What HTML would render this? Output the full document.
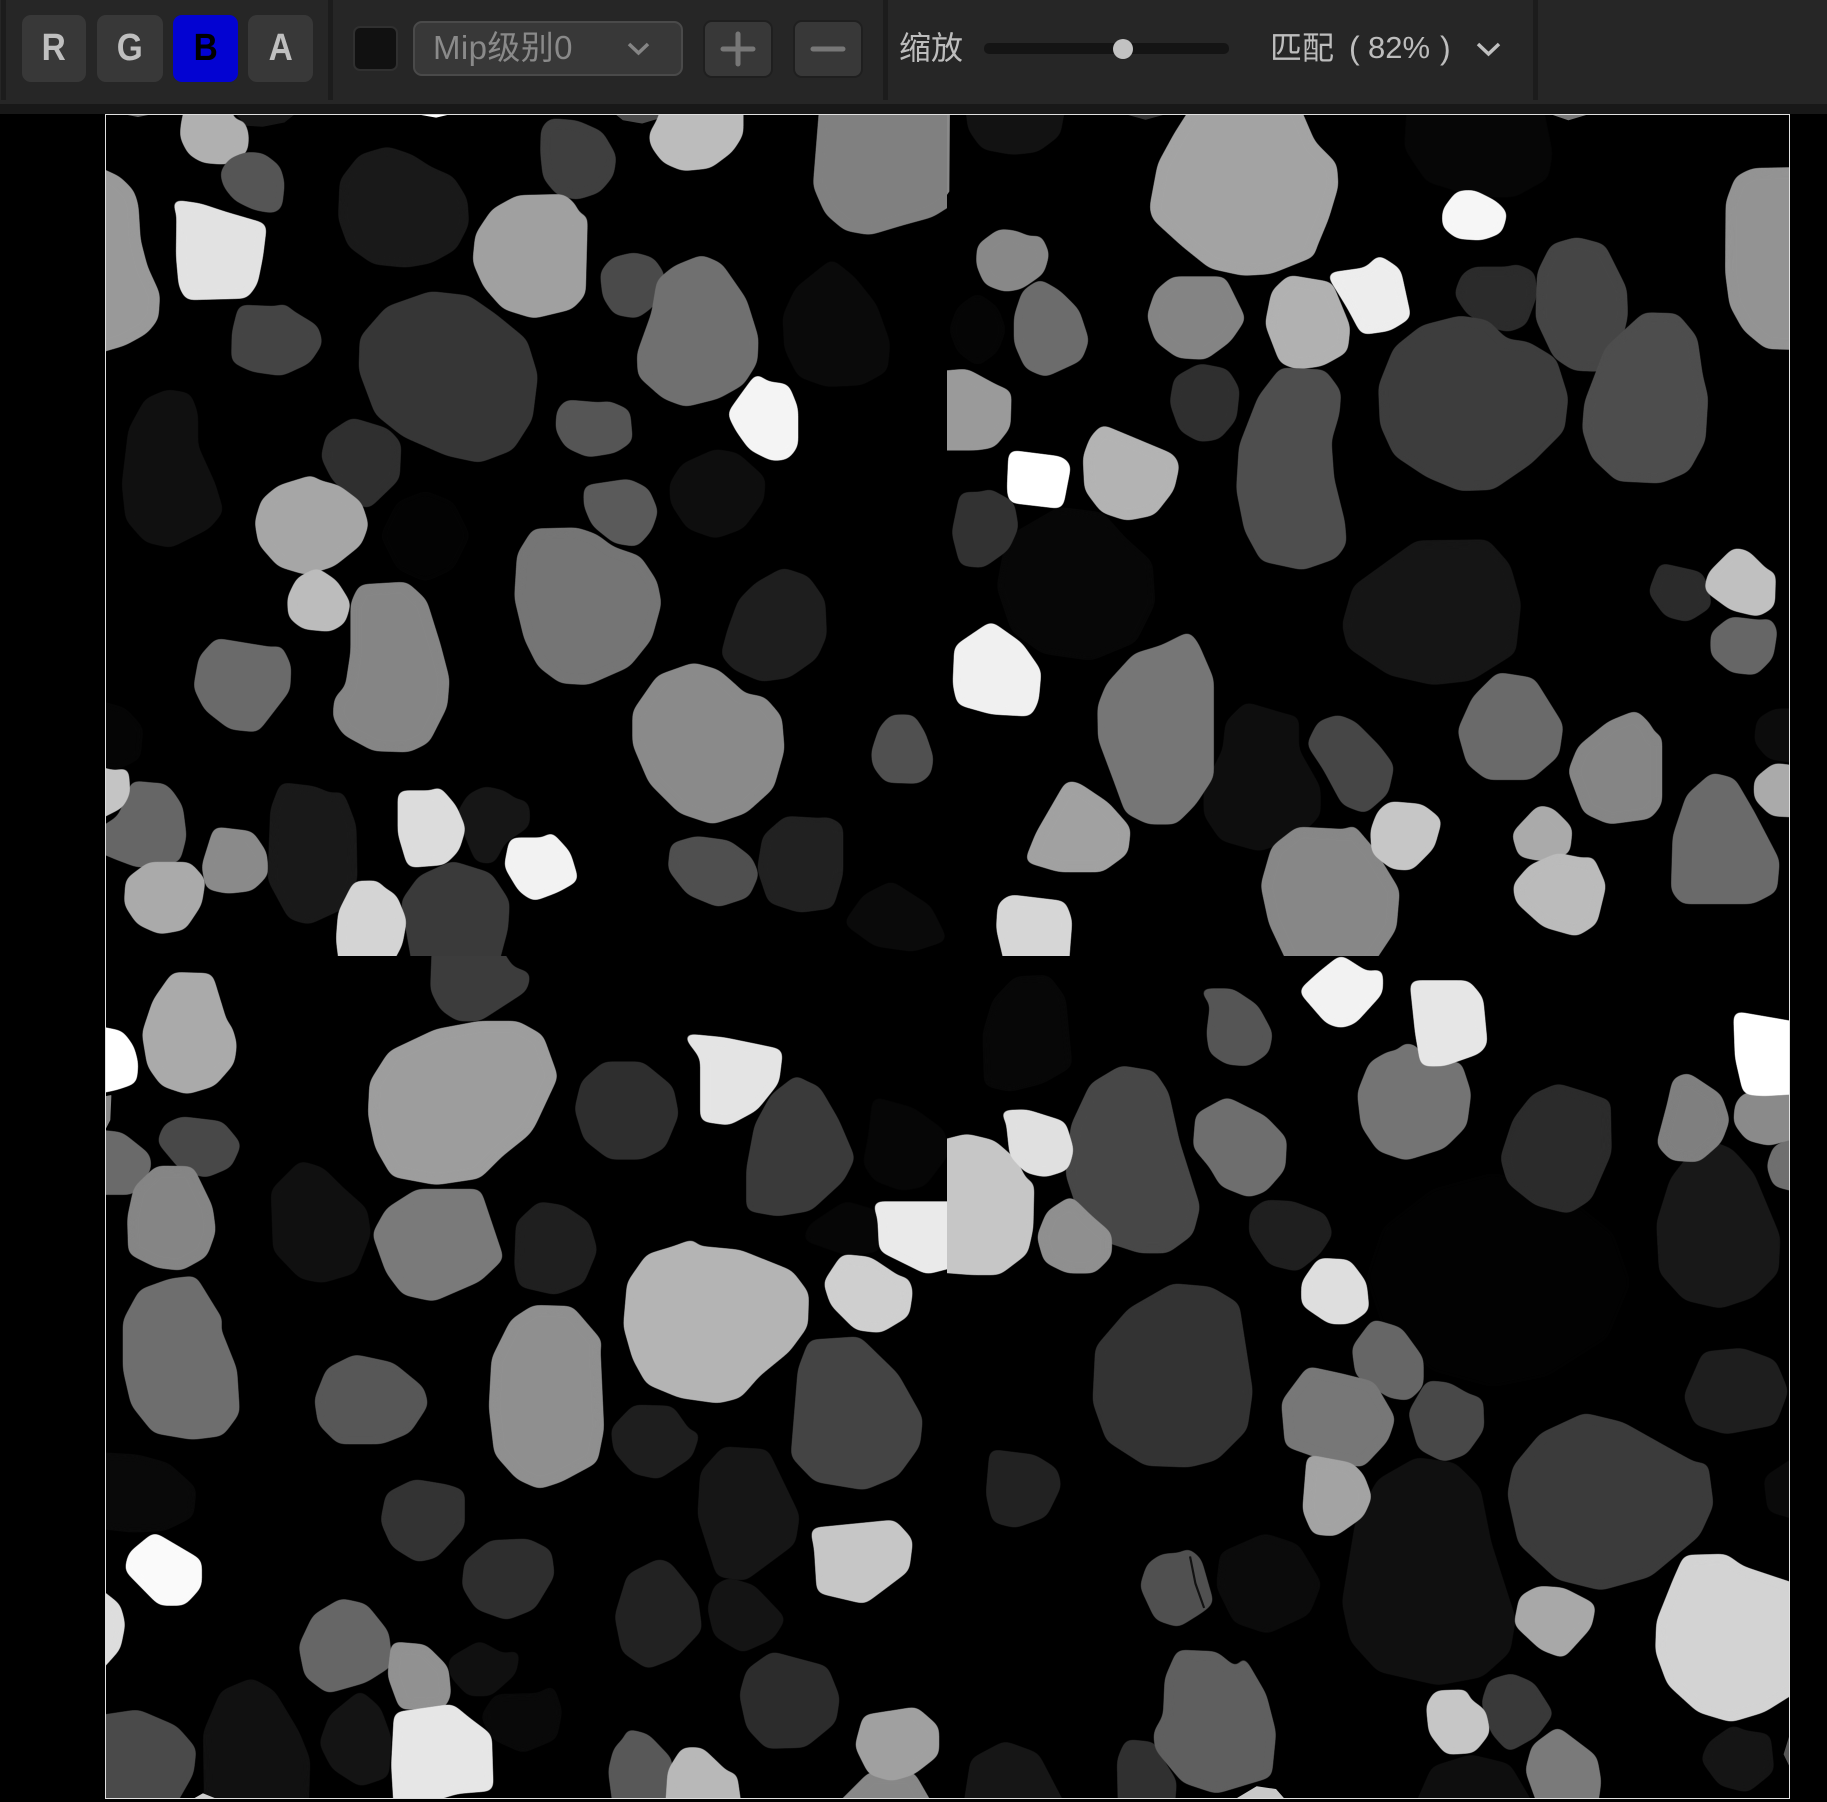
<!DOCTYPE html>
<html lang="zh"><head><meta charset="utf-8"><title>Mip</title>
<style>
html,body{margin:0;padding:0;background:#000;width:1827px;height:1802px;overflow:hidden}
body{position:relative;font-family:"Liberation Sans","Noto Sans CJK SC",sans-serif}
.a{position:absolute;box-sizing:border-box}
.btn{top:15px;height:67px;border-radius:9px;background:#383838;color:#bfbfbf;font-weight:700;font-size:38px;line-height:67px;text-align:center}
.btn span{display:inline-block;transform:scaleX(.88)}
.sep{top:0;width:5px;height:100px;background:#1c1c1c}
.sq{top:20px;height:58px;width:70px;border-radius:9px;background:#383838;border:2px solid #1f1f1f}
.t{white-space:nowrap;font-size:32px;line-height:40px}
svg polygon{fill:currentColor;stroke:currentColor;stroke-width:6;stroke-linejoin:round;filter:url(#r)}
svg polygon.n{filter:none;stroke-width:2}
</style></head><body>
<div class="a" style="left:0;top:0;width:1827px;height:104px;background:#262626"></div>
<div class="a" style="left:0;top:104px;width:1827px;height:10px;background:#181818"></div>
<div class="a sep" style="left:1px"></div><div class="a sep" style="left:328px"></div><div class="a sep" style="left:883px"></div><div class="a sep" style="left:1533px"></div>
<div class="a btn" style="left:22px;width:64px"><span>R</span></div>
<div class="a btn" style="left:97px;width:66px"><span>G</span></div>
<div class="a btn" style="left:173px;width:65px;background:#0303d2;color:#000"><span>B</span></div>
<div class="a btn" style="left:248px;width:65px"><span>A</span></div>
<div class="a" style="left:353px;top:26px;width:45px;height:45px;border-radius:7px;background:#111;border:2px solid #303030"></div>
<div class="a" style="left:413px;top:21px;width:270px;height:55px;border-radius:9px;background:#383838;border:2px solid #4a4a4a"></div>
<div class="a t" style="left:433px;top:28px;color:#8a8a8a;font-size:33px;letter-spacing:.4px">Mip级别0</div>
<div class="a sq" style="left:703px"></div><div class="a sq" style="left:793px"></div>
<div class="a t" style="left:899px;top:28px;color:#bdbdbd">缩放</div>
<div class="a" style="left:984px;top:43px;width:245px;height:11px;border-radius:5px;background:#141414"></div>
<div class="a" style="left:1113px;top:39px;width:20px;height:20px;border-radius:50%;background:#c2c2c2"></div>
<div class="a t" style="left:1270px;top:28px;color:#bdbdbd">匹配</div>
<div class="a t" style="left:1349px;top:28px;color:#bdbdbd">(</div>
<div class="a t" style="left:1368px;top:28px;color:#bdbdbd;font-size:31px">82%</div>
<div class="a t" style="left:1440px;top:28px;color:#bdbdbd">)</div>
<svg class="a" style="left:0;top:0" width="1827" height="1802" viewBox="0 0 1827 1802" fill="none">
<path d="M629 44L638.500 53L648 44" stroke="#858585" stroke-width="3.500"/>
<path d="M1478 44L1488.500 54L1499 44" stroke="#c0c0c0" stroke-width="3.500"/>
<path d="M723 49H753M738 34V64M813 49H843" stroke="#777" stroke-width="5" stroke-linecap="round"/>
<defs>
<clipPath id="c1"><rect x="105" y="114" width="842" height="842"/></clipPath>
<clipPath id="c2"><rect x="947" y="114" width="843" height="842"/></clipPath>
<clipPath id="c3"><rect x="105" y="956" width="842" height="843"/></clipPath>
<clipPath id="c4"><rect x="947" y="956" width="843" height="843"/></clipPath>
<filter id="r" x="-25%" y="-25%" width="150%" height="150%" color-interpolation-filters="sRGB">
<feGaussianBlur stdDeviation="9"/>
<feColorMatrix values="1 0 0 0 0 0 1 0 0 0 0 0 1 0 0 0 0 0 14 -6.500"/>
</filter>
</defs>
<g clip-path="url(#c1)"><g transform="translate(100 110) scale(.5421)">
<polygon class="n" color="#666" points="40,6 100,6 70,12"/>
<polygon class="n" color="#fff" points="580,6 650,6 620,13"/>
<polygon class="n" color="#161616" points="250,6 360,6 340,22 300,30 270,28"/>
<polygon color="#b0b0b0" points="160,-10 235,-10 248,25 258,30 262,15 272,45 270,75 250,92 230,98 190,95 165,80 150,50 152,25"/>
<polygon color="#555" points="270,80 300,82 330,105 338,135 333,180 320,188 285,182 250,165 230,140 224,115 240,92"/>
<polygon color="#999" points="-10,105 35,125 60,150 68,175 72,240 85,290 108,340 105,385 85,410 45,432 -10,448"/>
<polygon color="#e2e2e2" points="135,168 185,175 230,190 305,212 298,270 288,320 270,345 160,348 148,325 143,270 144,190"/>
<polygon color="#191919" points="530,70 575,85 610,108 650,125 675,165 678,210 655,255 610,280 565,288 505,282 460,250 442,200 445,130 480,85"/>
<polygon color="#3f3f3f" points="830,18 880,22 925,42 950,85 945,120 920,150 880,163 845,155 820,125 815,80 816,35"/>
<polygon class="n" color="#4a4a4a" points="950,6 1060,6 1000,24 965,18"/>
<polygon color="#bcbcbc" points="1040,-10 1184,-10 1184,45 1165,75 1125,105 1075,110 1040,95 1018,65 1015,45 1030,20"/>
<polygon color="#808080" points="1330,-10 1590,-10 1590,160 1535,195 1480,210 1420,228 1375,220 1340,190 1318,140"/>
<polygon color="#a0a0a0" points="770,160 855,158 875,175 887,208 897,190 893,340 870,365 800,382 745,365 710,325 690,280 695,230 725,185"/>
<polygon color="#4a4a4a" points="985,265 1020,275 1040,305 1020,360 990,382 950,375 930,345 925,300 945,275"/>
<polygon color="#707070" points="1110,270 1145,285 1190,350 1212,420 1210,465 1185,505 1140,530 1080,545 1040,530 995,490 993,450 1020,375 1030,315 1060,290"/>
<polygon color="#0a0a0a" points="1350,278 1390,310 1430,360 1455,430 1450,480 1405,505 1340,508 1290,490 1265,440 1262,380 1285,330"/>
<polygon color="#444" points="258,362 330,365 340,358 350,370 400,400 408,430 385,465 335,488 280,480 245,463 246,410"/>
<polygon color="#363636" points="610,337 680,345 730,380 785,425 805,490 795,570 760,625 700,648 640,635 560,600 510,560 480,480 482,420 530,365"/>
<polygon color="#f4f4f4" points="1212,488 1228,503 1268,508 1285,550 1285,620 1268,642 1240,645 1200,625 1175,590 1160,560 1185,525"/>
<polygon color="#555" points="860,537 930,543 935,538 975,555 980,610 950,630 900,638 860,620 843,590 845,555"/>
<polygon color="#101010" points="125,518 165,525 178,560 178,620 210,690 225,740 200,770 130,805 85,795 50,755 43,690 55,590 85,535"/>
<polygon color="#0e0e0e" points="1135,628 1175,635 1225,680 1222,720 1185,770 1135,788 1085,770 1055,725 1053,690 1075,655"/>
<polygon color="#2f2f2f" points="465,570 530,590 553,615 550,680 495,733 475,725 430,680 410,640 420,600"/>
<polygon color="#5a5a5a" points="895,695 975,683 1010,700 1027,740 1015,775 990,803 950,797 910,765 895,730"/>
<polygon color="#a6a6a6" points="395,675 390,682 440,695 480,725 493,765 480,800 430,840 380,855 330,840 295,800 288,760 300,720 330,695"/>
<polygon color="#030303" points="600,705 650,725 680,785 650,845 600,868 550,845 520,785 550,725"/>
<polygon color="#757575" points="800,775 880,773 915,785 945,808 995,825 1025,870 1033,910 1015,975 975,1025 900,1058 850,1055 810,1025 785,975 767,900 772,820"/>
<polygon color="#bcbcbc" points="400,847 435,870 460,910 450,945 425,960 375,955 350,935 348,900 365,865"/>
<polygon color="#858585" points="480,878 565,873 600,905 625,985 642,1050 638,1100 605,1165 570,1182 505,1180 450,1150 432,1120 435,1085 455,1065 465,1000 465,910"/>
<polygon color="#6a6a6a" points="215,977 325,995 332,988 350,1025 348,1070 290,1145 240,1140 195,1105 175,1065 185,1010"/>
<polygon color="#1e1e1e" points="1260,847 1305,862 1335,905 1338,970 1320,1010 1270,1045 1220,1052 1170,1030 1148,1005 1160,960 1180,905 1210,875"/>
<polygon color="#8a8a8a" points="1095,1022 1140,1035 1180,1070 1185,1078 1225,1085 1255,1120 1260,1180 1240,1250 1190,1295 1130,1315 1070,1295 1015,1240 985,1170 985,1110 1030,1045"/>
<polygon color="#505050" points="1460,1118 1500,1118 1520,1150 1535,1195 1530,1225 1510,1240 1450,1238 1428,1210 1425,1185 1440,1140"/>
<polygon color="#050505" points="-10,1090 45,1105 77,1140 72,1195 30,1215 -10,1212"/>
<polygon color="#666" points="60,1240 110,1245 115,1243 130,1255 150,1285 157,1340 145,1385 70,1395 30,1380 -5,1365 -5,1330 35,1305 50,1270"/>
<polygon color="#c4c4c4" points="-10,1212 30,1222 50,1215 53,1260 40,1285 -10,1310"/>
<polygon color="#8a8a8a" points="212,1325 280,1333 305,1370 308,1410 280,1438 235,1443 198,1435 190,1395"/>
<polygon color="#aaa" points="90,1390 165,1390 192,1420 185,1465 155,1510 110,1518 70,1500 47,1465 50,1420"/>
<polygon color="#191919" points="335,1243 395,1250 430,1265 445,1258 455,1280 470,1320 472,1420 450,1470 385,1500 350,1490 312,1420 317,1290"/>
<polygon color="#161616" points="710,1250 745,1258 775,1280 780,1272 790,1285 790,1320 745,1350 725,1388 695,1385 660,1300 680,1265"/>
<polygon color="#dcdcdc" points="552,1258 625,1258 622,1247 655,1285 672,1325 660,1365 635,1390 570,1395 552,1335"/>
<polygon color="#f2f2f2" points="758,1345 825,1345 830,1332 865,1370 880,1420 845,1440 800,1457 775,1440 748,1395"/>
<polygon color="#4f4f4f" points="1100,1342 1160,1350 1200,1380 1213,1410 1195,1450 1140,1468 1085,1445 1050,1400 1055,1355"/>
<polygon color="#212121" points="1265,1305 1345,1310 1340,1305 1368,1320 1368,1410 1350,1470 1290,1478 1235,1460 1215,1400 1225,1340"/>
<polygon color="#3a3a3a" points="650,1388 720,1410 753,1460 750,1510 730,1585 580,1585 558,1460 590,1415"/>
<polygon color="#d4d4d4" points="470,1425 515,1424 515,1432 545,1450 563,1495 555,1540 530,1585 445,1585 438,1530 442,1480"/>
<polygon color="#0a0a0a" points="1460,1425 1530,1470 1560,1530 1500,1550 1430,1540 1375,1500 1410,1450"/>
</g></g>
<g clip-path="url(#c2)"><g transform="translate(945 110) scale(.5421)">
<polygon color="#121212" points="40,-10 220,-10 210,45 170,75 125,80 70,70 45,35"/>
<polygon class="n" color="#333" points="330,6 410,6 370,17"/>
<polygon color="#a3a3a3" points="460,-10 650,-10 680,60 720,100 723,140 705,200 680,260 680,268 600,300 550,303 490,290 440,250 385,200 380,180 395,100 425,45"/>
<polygon color="#060606" points="855,-10 1100,-10 1118,80 1110,125 1050,158 980,158 890,130 850,70"/>
<polygon class="n" color="#777" points="1115,6 1190,6 1150,18"/>
<polygon color="#f6f6f6" points="945,152 975,150 1015,170 1035,190 1025,225 990,238 945,235 920,215 920,185"/>
<polygon color="#939393" points="1490,110 1590,108 1590,440 1515,438 1475,405 1450,360 1442,300 1443,170 1460,125"/>
<polygon class="n" color="#8a8a8a" points="0,6 8,6 7,150 0,160"/>
<polygon color="#888" points="100,222 130,225 160,238 175,232 190,265 180,300 140,328 110,333 75,320 60,285 62,250"/>
<polygon color="#6c6c6c" points="175,315 210,335 245,370 263,425 250,460 185,490 150,475 130,430 130,380 145,335"/>
<polygon color="#050505" points="60,340 95,365 110,405 95,445 60,470 25,445 10,405 25,365"/>
<polygon color="#848484" points="420,310 515,310 552,385 525,425 480,458 430,455 390,425 375,380 390,335"/>
<polygon color="#b1b1b1" points="635,307 712,320 745,400 740,445 695,470 650,476 620,465 593,395 605,335"/>
<polygon color="#ededed" points="707,303 778,293 800,270 838,295 857,382 820,405 770,412 745,365"/>
<polygon color="#2b2b2b" points="975,292 1050,292 1050,285 1085,300 1090,340 1070,395 1040,407 1010,400 965,375 942,340 955,305"/>
<polygon color="#454545" points="1120,250 1165,237 1215,250 1225,270 1255,330 1257,380 1245,430 1210,480 1160,478 1125,455 1092,385 1095,300"/>
<polygon color="#3d3d3d" points="880,400 950,382 1000,390 1035,425 1075,430 1125,460 1147,530 1140,590 1080,650 1010,698 950,700 890,675 830,635 805,580 802,510 830,440"/>
<polygon color="#4d4d4d" points="1290,376 1350,378 1385,420 1395,490 1405,530 1400,610 1370,665 1320,686 1240,682 1195,640 1178,590 1182,540 1220,440"/>
<polygon color="#2f2f2f" points="470,470 520,480 541,515 535,570 505,605 470,610 435,590 417,540 425,495"/>
<polygon color="#9a9a9a" points="40,480 95,510 120,520 118,585 90,620 60,625 -15,625 -15,485"/>
<polygon color="#070707" points="210,735 290,745 330,790 380,835 385,910 350,980 270,1013 180,1000 125,960 98,880 115,790"/>
<polygon color="#fff" points="120,630 215,642 230,655 215,733 120,722 117,700"/>
<polygon color="#b3b3b3" points="290,583 420,637 430,655 420,700 385,745 335,755 290,740 260,700 257,640 270,605"/>
<polygon color="#4e4e4e" points="620,478 700,482 728,520 725,560 710,610 715,680 735,760 738,800 720,825 660,846 585,830 555,775 540,700 545,620 580,530"/>
<polygon color="#323232" points="30,708 75,707 80,700 125,725 133,770 115,810 70,842 30,838 15,780"/>
<polygon color="#151515" points="870,797 1000,795 1040,840 1060,910 1050,1000 970,1050 900,1058 820,1040 745,990 735,950 755,880"/>
<polygon color="#2b2b2b" points="1320,838 1395,855 1405,880 1412,915 1370,942 1330,932 1300,890"/>
<polygon color="#c0c0c0" points="1455,810 1480,815 1525,860 1530,850 1528,915 1500,932 1450,920 1403,885 1410,855"/>
<polygon color="#666" points="1450,937 1515,945 1520,937 1533,960 1525,1010 1495,1040 1450,1035 1415,1005 1415,965"/>
<polygon color="#f0f0f0" points="85,946 140,985 175,1035 170,1090 157,1116 85,1112 25,1095 17,1060 20,990"/>
<polygon color="#0e0e0e" points="555,1095 640,1120 650,1120 650,1180 690,1250 690,1300 650,1340 580,1365 510,1345 480,1300 480,1250 515,1180 520,1130"/>
<polygon color="#767676" points="450,965 465,985 493,1050 493,1230 460,1280 425,1315 375,1315 335,1295 315,1240 285,1160 284,1100 300,1060 350,1005 400,990"/>
<polygon color="#464646" points="725,1118 755,1130 800,1175 826,1210 815,1260 775,1295 735,1280 700,1215 670,1170 690,1130"/>
<polygon color="#6a6a6a" points="1020,1040 1085,1050 1138,1135 1130,1190 1080,1233 1000,1233 965,1205 948,1145 975,1085"/>
<polygon color="#858585" points="1275,1110 1300,1135 1312,1165 1320,1150 1320,1280 1300,1305 1225,1315 1180,1295 1152,1220 1170,1175 1225,1130"/>
<polygon color="#0c0c0c" points="1530,1107 1590,1107 1590,1205 1520,1195 1495,1165 1500,1125"/>
<polygon color="#aaa" points="1530,1207 1590,1215 1590,1303 1525,1300 1495,1270 1495,1235"/>
<polygon color="#6a6a6a" points="1415,1225 1455,1235 1490,1295 1537,1385 1532,1440 1490,1462 1360,1462 1342,1440 1345,1340 1370,1265"/>
<polygon color="#a1a1a1" points="225,1240 245,1243 300,1280 340,1325 335,1370 290,1403 210,1403 150,1385 170,1335"/>
<polygon color="#878787" points="650,1325 750,1330 750,1318 790,1365 836,1440 830,1510 780,1585 640,1585 600,1500 585,1430 605,1360"/>
<polygon color="#c6c6c6" points="820,1278 880,1283 914,1310 900,1360 860,1400 825,1398 790,1370 787,1330 800,1295"/>
<polygon color="#aaa" points="1095,1285 1120,1290 1155,1325 1150,1370 1100,1383 1060,1375 1048,1335"/>
<polygon color="#bbb" points="1130,1373 1190,1385 1192,1375 1217,1430 1200,1500 1165,1522 1105,1505 1055,1460 1050,1430 1080,1395"/>
<polygon color="#d6d6d6" points="120,1450 220,1462 232,1495 225,1585 115,1585 97,1510 100,1465"/>
</g></g>
<g clip-path="url(#c3)"><g transform="translate(100 952) scale(.5421)">
<polygon color="#aaa" points="135,40 205,42 235,140 240,135 250,170 245,205 210,245 160,260 115,245 90,210 80,150 100,90"/>
<polygon color="#fff" points="-10,138 40,148 60,175 68,205 65,240 30,252 -10,260"/>
<polygon color="#3c3c3c" points="615,-10 735,-10 760,30 792,40 785,70 700,125 660,125 630,105 612,70"/>
<polygon color="#9d9d9d" points="700,130 770,130 815,155 842,230 800,320 790,335 740,375 700,415 620,427 540,412 510,360 497,300 500,240 535,185 620,145"/>
<polygon color="#e4e4e4" points="1078,153 1150,160 1257,182 1250,240 1210,290 1160,317 1110,310 1110,195"/>
<polygon color="#2e2e2e" points="930,205 1000,205 1055,250 1065,300 1040,360 1000,380 940,380 895,345 878,290 890,240"/>
<polygon color="#3a3a3a" points="1285,230 1300,240 1325,250 1360,310 1390,380 1370,420 1310,475 1250,485 1195,475 1195,400 1210,320 1240,265"/>
<polygon class="n" color="#888" points="5,268 20,265 18,310 5,335"/>
<polygon color="#060606" points="1428,270 1500,290 1555,330 1565,370 1520,430 1480,438 1430,420 1410,390 1420,340"/>
<polygon color="#484848" points="150,306 225,315 258,355 240,395 195,414 150,400 108,350 120,320"/>
<polygon color="#6a6a6a" points="-10,330 40,335 90,375 92,400 60,445 -10,445"/>
<polygon color="#858585" points="105,397 170,398 205,470 211,515 195,560 150,585 105,580 55,555 53,490 65,435"/>
<polygon color="#101010" points="370,388 410,400 445,435 490,475 497,520 470,590 410,608 370,600 322,550 318,440"/>
<polygon color="#7a7a7a" points="585,440 700,440 742,565 700,605 615,642 560,630 530,590 505,520 530,475"/>
<polygon color="#1f1f1f" points="810,463 855,470 900,500 915,550 890,610 840,630 775,615 767,580 770,500"/>
<polygon color="#060606" points="1375,462 1435,480 1437,550 1380,558 1300,530 1310,505"/>
<polygon color="#eaeaea" points="1428,463 1590,463 1590,575 1525,592 1440,550 1437,490"/>
<polygon color="#b4b4b4" points="1100,530 1085,543 1180,552 1275,590 1305,630 1303,690 1270,735 1215,780 1180,820 1140,830 1070,820 1010,795 985,750 968,690 975,610 1010,560 1060,545"/>
<polygon color="#cfcfcf" points="1370,560 1420,565 1480,605 1488,600 1497,625 1490,670 1440,700 1395,695 1350,650 1337,610"/>
<polygon color="#6e6e6e" points="130,605 175,600 215,665 225,680 218,690 250,770 255,850 225,890 170,897 100,885 60,835 45,770 45,680 75,625"/>
<polygon color="#575757" points="470,745 540,760 595,805 603,835 570,885 520,905 440,905 405,870 398,825 420,770"/>
<polygon color="#8f8f8f" points="800,654 870,656 925,720 920,725 927,880 915,940 850,975 810,988 770,970 730,925 720,840 725,750 760,680"/>
<polygon color="#1e1e1e" points="985,838 1055,840 1090,890 1105,885 1090,930 1030,970 985,960 950,920 945,880"/>
<polygon color="#444" points="1310,718 1400,712 1470,780 1515,860 1510,910 1470,965 1410,990 1320,975 1277,930 1290,770"/>
<polygon color="#161616" points="1150,915 1230,920 1288,1040 1280,1090 1190,1157 1140,1150 1105,1040 1110,960"/>
<polygon color="#090909" points="-10,925 70,930 125,945 175,990 170,1040 120,1065 60,1068 -10,1060"/>
<polygon color="#333" points="580,975 640,985 670,995 670,1060 620,1115 585,1123 540,1095 520,1050 530,1000"/>
<polygon color="#fafafa" points="100,1073 185,1123 185,1170 155,1203 110,1203 48,1140 55,1110"/>
<polygon color="#c6c6c6" points="1313,1065 1465,1050 1497,1085 1490,1140 1410,1200 1325,1180 1320,1100"/>
<polygon color="#2e2e2e" points="720,1088 790,1085 830,1105 836,1150 800,1210 750,1230 695,1210 670,1170 675,1125"/>
<polygon color="#ddd" points="-10,1170 35,1205 44,1240 35,1285 -10,1335"/>
<polygon color="#222" points="1030,1122 1050,1128 1100,1190 1108,1250 1060,1300 1010,1320 965,1290 952,1225 975,1150"/>
<polygon color="#141414" points="1160,1157 1205,1170 1262,1230 1240,1265 1185,1290 1135,1260 1123,1210 1135,1170"/>
<polygon color="#666" points="445,1195 490,1205 530,1255 537,1315 490,1345 420,1365 380,1335 369,1280 395,1225"/>
<polygon color="#919191" points="540,1275 600,1280 640,1320 645,1370 635,1392 555,1395 533,1335"/>
<polygon color="#101010" points="700,1273 745,1298 772,1290 765,1330 720,1370 680,1370 648,1335 645,1305"/>
<polygon color="#2c2c2c" points="1240,1293 1265,1300 1340,1320 1362,1375 1355,1420 1300,1465 1230,1467 1195,1430 1182,1370 1195,1325"/>
<polygon color="#111" points="280,1342 320,1365 365,1440 385,1490 382,1585 195,1585 193,1440 225,1365"/>
<polygon color="#4a4a4a" points="-10,1412 70,1400 140,1430 175,1470 170,1515 130,1585 -10,1585"/>
<polygon color="#141414" points="480,1365 515,1395 535,1450 530,1520 480,1537 430,1505 407,1460 425,1410"/>
<polygon color="#090909" points="730,1372 810,1370 835,1355 850,1400 840,1450 780,1475 725,1450 705,1410"/>
<polygon color="#e6e6e6" points="545,1405 650,1390 680,1415 720,1445 723,1545 660,1550 545,1585 540,1500"/>
<polygon color="#878787" points="1420,1515 1500,1515 1540,1585 1350,1585"/>
<polygon color="#a0a0a0" points="1410,1410 1505,1395 1545,1430 1545,1480 1500,1515 1460,1527 1420,1515 1395,1465"/>
<polygon color="#585858" points="975,1445 970,1435 1010,1445 1053,1490 1048,1585 950,1585 940,1510 950,1470"/>
<polygon color="#b8b8b8" points="1075,1470 1110,1470 1160,1518 1172,1515 1182,1585 1045,1585 1050,1510"/>
<polygon class="n" color="#ccc" points="160,1570 190,1553 232,1570"/>
</g></g>
<g clip-path="url(#c4)"><g transform="translate(945 952) scale(.5421)">
<polygon color="#020202" points="1010,410 1130,440 1230,520 1262,610 1220,710 1110,780 1010,800 900,770 810,690 780,600 810,510 900,440"/>
<polygon color="#070707" points="130,48 190,45 220,85 232,210 180,240 120,255 75,245 72,150 90,90"/>
<polygon color="#f2f2f2" points="730,8 780,40 805,33 805,75 755,130 730,138 705,130 655,72 690,40"/>
<polygon color="#555" points="472,70 530,70 575,100 602,150 595,185 560,208 520,205 490,185 485,150 492,95"/>
<polygon color="#747474" points="820,185 840,185 845,170 870,175 880,205 950,205 968,260 960,320 920,360 850,382 800,365 770,320 763,260 785,205"/>
<polygon color="#e6e6e6" points="860,55 965,55 990,85 998,170 985,185 920,208 880,208 870,150"/>
<polygon color="#2b2b2b" points="1130,245 1195,265 1205,270 1225,275 1227,370 1190,455 1150,480 1090,465 1040,425 1027,380 1050,310 1085,265"/>
<polygon color="#6f6f6f" points="1590,335 1590,445 1530,430 1518,395 1530,360"/>
<polygon color="#181818" points="1415,352 1450,365 1490,410 1515,470 1538,525 1535,590 1490,635 1430,655 1365,640 1320,590 1315,500 1340,420 1375,375"/>
<polygon color="#7f7f7f" points="1345,235 1370,225 1430,265 1445,310 1430,350 1390,385 1340,382 1315,355 1335,280"/>
<polygon color="#8a8a8a" points="1475,262 1590,258 1590,335 1520,355 1480,345 1457,315 1460,280"/>
<polygon color="#fff" points="1457,112 1590,135 1590,258 1510,263 1475,260 1460,195"/>
<polygon color="#474747" points="325,212 385,222 410,260 430,350 468,470 455,520 410,553 360,553 290,530 245,470 225,410 235,320 270,245"/>
<polygon color="#c6c6c6" points="-15,352 40,338 90,350 130,385 150,425 155,440 162,420 160,510 150,555 100,593 50,593 -15,588"/>
<polygon color="#e0e0e0" points="103,295 150,293 220,315 235,365 225,400 185,413 150,405 122,375 115,310"/>
<polygon color="#6e6e6e" points="520,270 590,305 628,345 625,400 590,440 560,450 510,430 490,395 460,360 465,300"/>
<polygon color="#8f8f8f" points="232,453 270,490 305,520 305,560 275,590 225,590 185,570 172,525 190,480"/>
<polygon color="#1f1f1f" points="590,460 640,462 700,485 713,520 690,555 650,587 600,575 563,520 565,480"/>
<polygon color="#dedede" points="690,567 745,570 775,610 780,660 745,684 710,684 660,650 660,610"/>
<polygon color="#333" points="420,614 490,620 540,650 565,810 555,880 500,935 450,948 370,945 300,900 275,830 280,730 340,660"/>
<polygon color="#666" points="790,680 840,695 880,750 880,800 855,825 820,820 760,780 753,730"/>
<polygon color="#484848" points="890,793 930,797 965,818 990,825 992,880 960,925 920,938 875,915 857,850"/>
<polygon color="#777" points="670,767 730,780 790,795 828,860 815,900 770,948 700,935 630,910 623,830"/>
<polygon color="#1e1e1e" points="1400,740 1470,733 1530,755 1553,810 1530,870 1440,887 1385,870 1365,820"/>
<polygon color="#3b3b3b" points="1180,853 1250,870 1330,915 1385,945 1405,945 1415,1020 1390,1075 1300,1150 1210,1175 1130,1155 1060,1090 1040,1000 1050,950 1100,890"/>
<polygon color="#101010" points="870,935 940,945 985,990 1005,1090 1050,1230 1040,1290 990,1335 910,1350 800,1325 750,1270 735,1200 760,1050 800,975"/>
<polygon color="#a3a3a3" points="670,930 750,945 770,965 785,1005 770,1040 720,1075 680,1072 662,1030"/>
<polygon color="#0a0a0a" points="1590,920 1590,1050 1520,1030 1513,970"/>
<polygon color="#0b0b0b" points="590,1075 650,1095 692,1165 670,1220 595,1255 535,1235 503,1170 510,1110"/>
<polygon color="#505050" points="400,1113 445,1110 445,1100 470,1120 493,1200 475,1215 430,1243 390,1230 362,1170 375,1130"/>
<path d="M452 1115L462 1165L478 1210" stroke="#111" stroke-width="4" fill="none"/>
<polygon color="#a8a8a8" points="1095,1172 1140,1175 1198,1205 1190,1245 1140,1300 1100,1285 1052,1240 1062,1190"/>
<polygon color="#d3d3d3" points="1365,1115 1440,1113 1470,1135 1590,1175 1590,1350 1510,1400 1450,1418 1390,1400 1335,1350 1313,1290 1315,1235 1345,1160"/>
<polygon color="#222" points="85,920 165,930 205,955 212,985 185,1040 130,1060 90,1050 78,1000"/>
<polygon color="#303030" points="335,1455 385,1460 400,1490 425,1530 420,1585 322,1585 320,1490"/>
<polygon color="#5f5f5f" points="430,1290 500,1293 545,1330 548,1298 590,1370 608,1440 600,1520 500,1550 440,1530 390,1470 387,1440 405,1410 408,1340"/>
<polygon color="#161616" points="110,1458 170,1480 225,1585 35,1585 50,1490"/>
<polygon class="n" color="#c8c8c8" points="525,1570 575,1540 610,1545 632,1570"/>
<polygon color="#0e0e0e" points="865,1585 900,1505 970,1483 1040,1500 1090,1585"/>
<polygon color="#393939" points="1045,1333 1085,1350 1120,1405 1090,1445 1040,1473 1010,1440 992,1385 1005,1345"/>
<polygon color="#c6c6c6" points="905,1365 965,1363 960,1375 995,1400 1003,1440 975,1475 925,1478 895,1440 890,1390"/>
<polygon color="#7a7a7a" points="1130,1432 1200,1485 1208,1530 1200,1585 1100,1585 1073,1510 1085,1465"/>
<polygon color="#151515" points="1455,1428 1470,1438 1520,1445 1527,1510 1480,1548 1430,1535 1397,1490 1410,1460"/>
<polygon class="n" color="#555" points="1565,1425 1565,1515 1548,1480"/>
</g></g>
<rect x="105.500" y="114.500" width="1684" height="1684" fill="none" stroke="#e0e0e0" stroke-width="1"/>
</svg>
</body></html>
